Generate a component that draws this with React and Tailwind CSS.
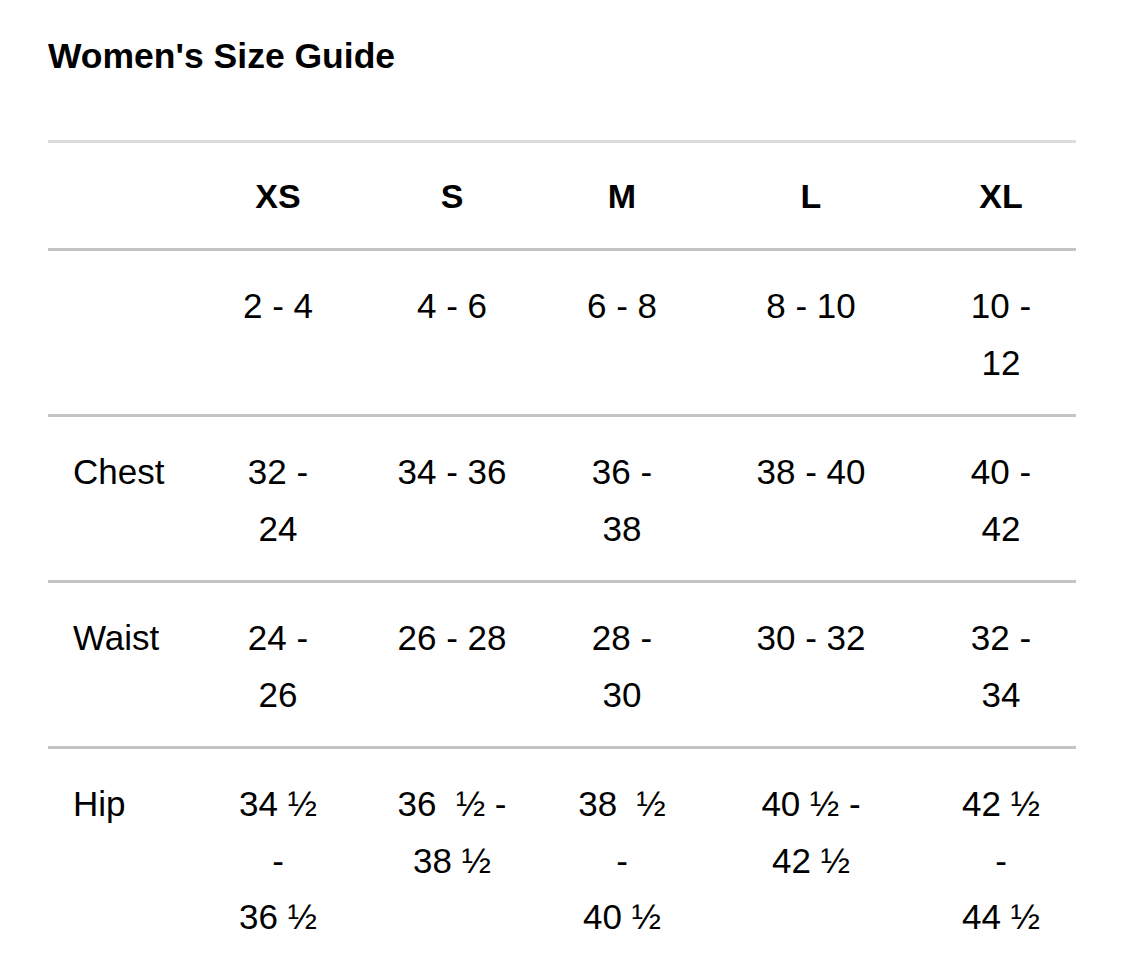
const sizes = ["XS", "S", "M", "L", "XL"];

const rows = [
  { label: "", cells: [["2 - 4"], ["4 - 6"], ["6 - 8"], ["8 - 10"], ["10 -", "12"]] },
  { label: "Chest", cells: [["32 -", "24"], ["34 - 36"], ["36 -", "38"], ["38 - 40"], ["40 -", "42"]] },
  { label: "Waist", cells: [["24 -", "26"], ["26 - 28"], ["28 -", "30"], ["30 - 32"], ["32 -", "34"]] },
  {
    label: "Hip",
    cells: [
      ["34 ½", "-", "36 ½"],
      ["36  ½ -", "38 ½"],
      ["38  ½", "-", "40 ½"],
      ["40 ½ -", "42 ½"],
      ["42 ½", "-", "44 ½"],
    ],
  },
];

const gridCols = "grid grid-cols-[152px_156px_192px_148px_230px_150px]";

const App = () => {
  return (
    <div
      className="min-h-[966px] bg-white text-black px-12 pt-[36px]"
      style={{ fontFamily: '"Liberation Sans", Arial, sans-serif' }}
    >
      <h1 className="text-[35.5px] font-bold leading-[40px] tracking-normal">
        Women's Size Guide
      </h1>

      <div className="mt-[64px] w-[1028px] border-t-[3px] border-[#dcdcdc]">
        {/* Header */}
        <div className={`${gridCols} border-b-[3px] border-[#c4c4c4] pt-[25px] pb-[24px] text-[34px] font-bold leading-[56px]`}>
          <div></div>
          {sizes.map((s) => (
            <div key={s} className="text-center">
              {s}
            </div>
          ))}
        </div>

        {rows.map((row, i) => (
          <div
            key={i}
            className={`${gridCols} pt-[27px] pb-[23px] text-[35px] leading-[56.5px] ${
              i < rows.length - 1 ? "border-b-[3px] border-[#c4c4c4]" : ""
            }`}
          >
            <div className="pl-[25px]">{row.label}</div>
            {row.cells.map((lines, j) => (
              <div key={j} className="text-center whitespace-pre">
                {lines.map((l, k) => (
                  <div key={k}>{l}</div>
                ))}
              </div>
            ))}
          </div>
        ))}
      </div>
    </div>
  );
};

export default App;
